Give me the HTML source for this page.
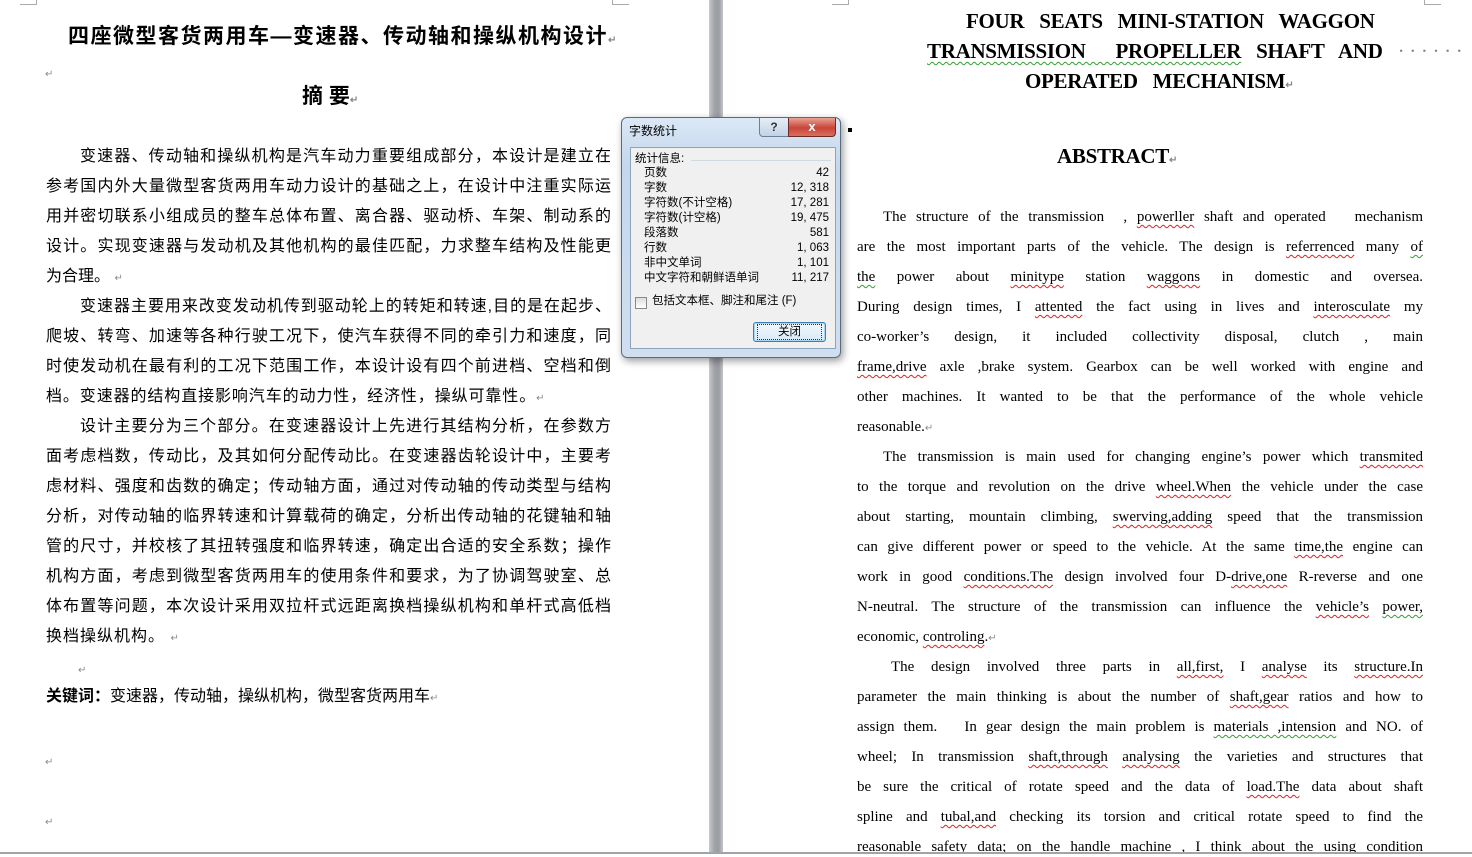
<!DOCTYPE html>
<html><head><meta charset="utf-8"><style>
html,body{margin:0;padding:0}
body{width:1472px;height:854px;position:relative;overflow:hidden;background:#fff;font-family:"Liberation Serif","Noto Serif CJK SC",serif;color:#000}
.bar{position:absolute;left:709px;top:0;width:14px;height:854px;background:linear-gradient(90deg,#c8cacd,#9fa2a7 40%,#9a9da2 70%,#c4c6c9)}
.bot{position:absolute;left:0;top:852px;width:1472px;height:2px;background:#a0a3a8}
.c{position:absolute;font-family:"Liberation Sans","Noto Sans CJK SC",sans-serif;font-size:16px;line-height:22px;height:22px;white-space:nowrap;margin-top:2px}
.j{text-align:justify;text-align-last:justify;left:46px;width:565px}
.r{position:absolute;left:857px;width:566px;font-family:"Liberation Serif",serif;font-size:15px;line-height:20px;height:20px;white-space:nowrap;text-align:justify;text-align-last:justify;margin-top:2px}
.nl{text-align-last:left}
.m{color:#888;font-size:10px}
.w{text-decoration:underline wavy #e02020;text-decoration-thickness:1px;text-underline-offset:3px}
.g{text-decoration:underline wavy #30a030;text-decoration-thickness:1px;text-underline-offset:3px}
.t{position:absolute;font-family:"Liberation Serif",serif;font-weight:bold;font-size:21px;white-space:nowrap;letter-spacing:-0.3px;word-spacing:10px;margin-top:1px}
.crn{position:absolute;width:16px;height:4px;border:1px solid #aaa;border-top:none}
.dlg{position:absolute;left:621px;top:117px;width:218px;height:239px;border:1px solid #5a6b80;border-radius:6px;background:linear-gradient(180deg,#dbe8f6,#c4d7ec 20%,#cfdff0);box-shadow:2px 3px 8px rgba(0,0,0,.4)}
.pan{position:absolute;left:8px;top:29px;width:204px;height:200px;background:#f0f0f0;border:1px solid #8da2bb}
.dl{position:absolute;font-family:"Liberation Sans","Noto Sans CJK SC",sans-serif;font-size:11.5px;line-height:15px;white-space:nowrap}
</style></head><body>
<div class="crn" style="left:20px;top:0;border-left:none"></div>
<div class="crn" style="left:612px;top:0;border-right:none"></div>
<div class="crn" style="left:832px;top:0;border-left:none"></div>
<div class="crn" style="left:1424px;top:0;border-right:none"></div>

<div class="c" style="left:68px;top:23px;font-size:21px;font-weight:bold;line-height:24px;letter-spacing:1.5px">四座微型客货两用车—变速器、传动轴和操纵机构设计<span class="m">↵</span></div>
<div class="c" style="left:45px;top:60px"><span class="m">↵</span></div>
<div class="c" style="left:302px;top:83px;font-size:21px;font-weight:bold;line-height:24px">摘 要<span class="m">↵</span></div>

<div class="c j" style="top:144px;padding-left:34px;width:531px">变速器、传动轴和操纵机构是汽车动力重要组成部分，本设计是建立在</div>
<div class="c j" style="top:174px">参考国内外大量微型客货两用车动力设计的基础之上，在设计中注重实际运</div>
<div class="c j" style="top:204px">用并密切联系小组成员的整车总体布置、离合器、驱动桥、车架、制动系的</div>
<div class="c j" style="top:234px">设计。实现变速器与发动机及其他机构的最佳匹配，力求整车结构及性能更</div>
<div class="c" style="left:46px;top:264px">为合理。 <span class="m">↵</span></div>
<div class="c j" style="top:294px;padding-left:34px;width:531px">变速器主要用来改变发动机传到驱动轮上的转矩和转速,目的是在起步、</div>
<div class="c j" style="top:324px">爬坡、转弯、加速等各种行驶工况下，使汽车获得不同的牵引力和速度，同</div>
<div class="c j" style="top:354px">时使发动机在最有利的工况下范围工作，本设计设有四个前进档、空档和倒</div>
<div class="c" style="left:46px;top:384px;letter-spacing:0.9px">档。变速器的结构直接影响汽车的动力性，经济性，操纵可靠性。<span class="m">↵</span></div>
<div class="c j" style="top:414px;padding-left:34px;width:531px">设计主要分为三个部分。在变速器设计上先进行其结构分析，在参数方</div>
<div class="c j" style="top:444px">面考虑档数，传动比，及其如何分配传动比。在变速器齿轮设计中，主要考</div>
<div class="c j" style="top:474px">虑材料、强度和齿数的确定；传动轴方面，通过对传动轴的传动类型与结构</div>
<div class="c j" style="top:504px">分析，对传动轴的临界转速和计算载荷的确定，分析出传动轴的花键轴和轴</div>
<div class="c j" style="top:534px">管的尺寸，并校核了其扭转强度和临界转速，确定出合适的安全系数；操作</div>
<div class="c j" style="top:564px">机构方面，考虑到微型客货两用车的使用条件和要求，为了协调驾驶室、总</div>
<div class="c j" style="top:594px">体布置等问题，本次设计采用双拉杆式远距离换档操纵机构和单杆式高低档</div>
<div class="c" style="left:46px;top:624px;letter-spacing:1px">换档操纵机构。 <span class="m">↵</span></div>
<div class="c" style="left:78px;top:656px"><span class="m">↵</span></div>
<div class="c" style="left:46px;top:684px"><b>关键词：</b>变速器，传动轴，操纵机构，微型客货两用车<span class="m">↵</span></div>
<div class="c" style="left:45px;top:748px"><span class="m">↵</span></div>
<div class="c" style="left:45px;top:808px"><span class="m">↵</span></div>

<div class="bar"></div>

<div class="t" style="left:966px;top:8px">FOUR SEATS MINI-STATION WAGGON</div>
<div class="t" style="left:927px;top:38px"><span class="g">TRANSMISSION &nbsp;PROPELLER</span> SHAFT AND <span style="color:#888;font-weight:normal;word-spacing:0">· · · · · ·</span></div>
<div class="t" style="left:1025px;top:68px">OPERATED MECHANISM<span class="m">↵</span></div>
<div class="t" style="left:1057px;top:143px">ABSTRACT<span class="m">↵</span></div>
<div style="position:absolute;left:848px;top:128px;width:4px;height:4px;background:#000"></div>

<div class="r" style="top:205px;padding-left:26px;width:540px">The structure of the transmission &nbsp;, <span class="w">powerller</span> shaft and operated &nbsp; mechanism</div>
<div class="r" style="top:235px">are the most important parts of the vehicle. The design is <span class="w">referrenced</span> many <span class="g">of</span></div>
<div class="r" style="top:265px"><span class="g">the</span> power about <span class="w">minitype</span> station <span class="w">waggons</span> in domestic and oversea.</div>
<div class="r" style="top:295px">During design times, I <span class="w">attented</span> the fact using in lives and <span class="w">interosculate</span> my</div>
<div class="r" style="top:325px">co-worker’s design, it included collectivity disposal, clutch , main</div>
<div class="r" style="top:355px"><span class="w">frame,drive</span> axle ,brake system. Gearbox can be well worked with engine and</div>
<div class="r" style="top:385px">other machines. It wanted to be that the performance of the whole vehicle</div>
<div class="r nl" style="top:415px">reasonable.<span class="m">↵</span></div>
<div class="r" style="top:445px;padding-left:26px;width:540px">The transmission is main used for changing engine’s power which <span class="w">transmited</span></div>
<div class="r" style="top:475px">to the torque and revolution on the drive <span class="w">wheel.When</span> the vehicle under the case</div>
<div class="r" style="top:505px">about starting, mountain climbing, <span class="w">swerving,adding</span> speed that the transmission</div>
<div class="r" style="top:535px">can give different power or speed to the vehicle. At the same <span class="w">time,the</span> engine can</div>
<div class="r" style="top:565px">work in good <span class="w">conditions.The</span> design involved four D-<span class="w">drive,one</span> R-reverse and one</div>
<div class="r" style="top:595px">N-neutral. The structure of the transmission can influence the <span class="w">vehicle’s</span> <span class="g">power,</span></div>
<div class="r nl" style="top:625px">economic, <span class="w">controling</span>.<span class="m">↵</span></div>
<div class="r" style="top:655px;padding-left:34px;width:532px">The design involved three parts in <span class="w">all,first,</span> I <span class="w">analyse</span> its <span class="w">structure.In</span></div>
<div class="r" style="top:685px">parameter the main thinking is about the number of <span class="w">shaft,gear</span> ratios and how to</div>
<div class="r" style="top:715px">assign them. &nbsp; In gear design the main problem is <span class="g">materials ,intension</span> and NO. of</div>
<div class="r" style="top:745px">wheel; In transmission <span class="w">shaft,through</span> <span class="w">analysing</span> the varieties and structures that</div>
<div class="r" style="top:775px">be sure the critical of rotate speed and the data of <span class="w">load.The</span> data about shaft</div>
<div class="r" style="top:805px">spline and <span class="w">tubal,and</span> checking its torsion and critical rotate speed to find the</div>
<div class="r" style="top:835px">reasonable safety data; on the handle machine , I think about the using condition</div>

<div class="bot"></div>

<div class="dlg">
 <div class="dl" style="left:7px;top:6px;font-size:12px">字数统计</div>
 <div style="position:absolute;left:137px;top:0;width:28px;height:18px;border:1px solid #6d7f96;border-top:none;border-radius:0 0 0 4px;background:linear-gradient(#e6eef8,#c2d2e6);font:bold 12px 'Liberation Sans',sans-serif;text-align:center;line-height:18px;color:#333">?</div>
 <div style="position:absolute;left:166px;top:0;width:46px;height:18px;border:1px solid #6d2a22;border-top:none;border-radius:0 0 4px 0;background:linear-gradient(#e9a394,#c9443a 55%,#d8705f);font:bold 13px 'Liberation Sans',sans-serif;text-align:center;line-height:18px;color:#fff">x</div>
 <div class="pan">
  <div class="dl" style="left:4px;top:4px">统计信息:</div>
  <div style="position:absolute;left:60px;top:12px;width:140px;height:1px;background:#d0d8e0"></div>
  <div class="dl" style="left:13px;top:18px;line-height:15px">页数<br>字数<br>字符数(不计空格)<br>字符数(计空格)<br>段落数<br>行数<br>非中文单词<br>中文字符和朝鲜语单词</div>
  <div class="dl" style="right:6px;top:18px;text-align:right;line-height:15px">42<br>12, 318<br>17, 281<br>19, 475<br>581<br>1, 063<br>1, 101<br>11, 217</div>
  <div style="position:absolute;left:4px;top:149px;width:10px;height:10px;border:1px solid #888;background:linear-gradient(#ddd,#fff)"></div>
  <div class="dl" style="left:21px;top:146px">包括文本框、脚注和尾注 (F)</div>
  <div style="position:absolute;left:122px;top:174px;width:71px;height:18px;border:1px solid #3c7fb1;border-radius:3px;background:linear-gradient(#f2f8fd,#d6eaf8);box-shadow:inset 0 0 0 1px #a9d6f5"><div class="dl" style="left:3px;top:1px;width:63px;height:14px;border:1px dotted #333;text-align:center;line-height:14px">关闭</div></div>
 </div>
</div>
</body></html>
